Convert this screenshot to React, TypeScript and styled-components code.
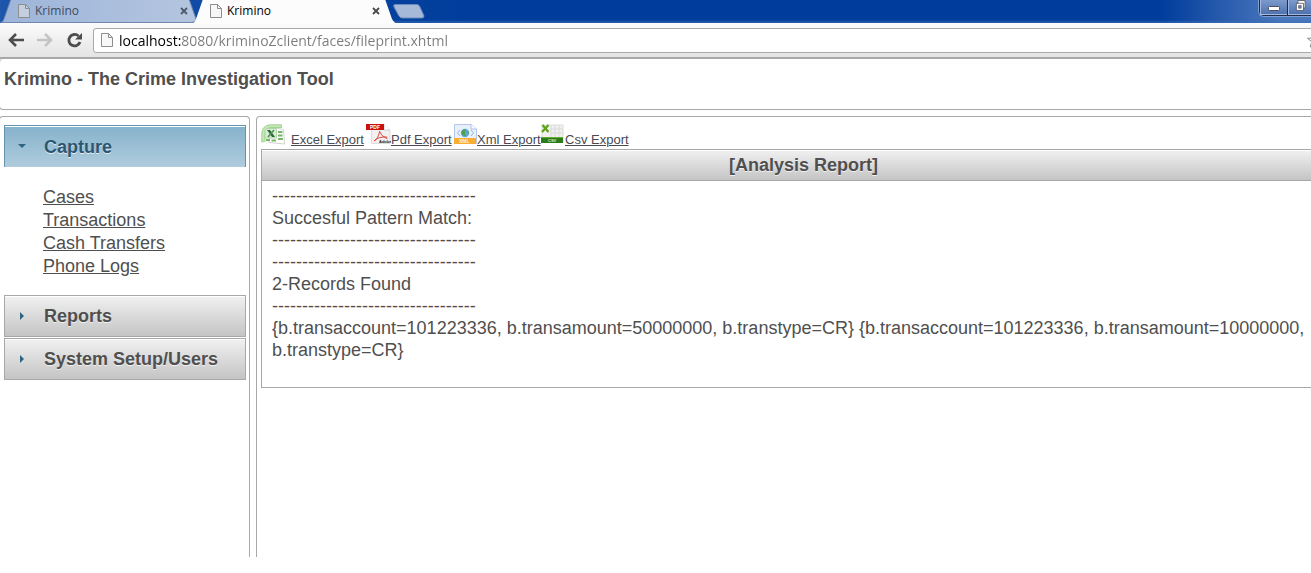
import React from "react";
import styled, { createGlobalStyle } from "styled-components";

const GlobalStyle = createGlobalStyle`
  * { box-sizing: border-box; }
  body {
    margin: 0;
    background: #fff;
    color: #4f4f4f;
    font-family: "Liberation Sans", Arial, sans-serif;
    font-size: 18px;
    line-height: 22px;
    overflow: hidden;
  }
  button { font: inherit; color: inherit; border: 0; padding: 0; background: none; }
`;

const Screen = styled.div`
  overflow: hidden;
`;

const BrowserWindow = styled.div`
  margin-right: -40px;
`;

const TabStrip = styled.header`
  display: flex;
  align-items: flex-start;
  height: 23px;
  background: linear-gradient(90deg, #1c55ab 0, #003c9b 480px, #003c9b 1160px, #4b78bd 1280px);
  box-shadow: inset 0 -2px 2px rgba(60, 110, 180, 0.6);
`;

const TabBox = styled.div`
  position: relative;
  display: flex;
  align-items: center;
  flex: 0 0 192px;
  height: 22px;
  padding: 0 4px 0 18px;
`;

const TabShape = styled.svg`
  position: absolute;
  left: 0;
  top: 0;
  width: 206px;
  height: 24px;
`;

const TabButton = styled.button<{ $active?: boolean }>`
  position: relative;
  display: flex;
  align-items: center;
  flex: 1;
  gap: 5px;
  font-family: "Open Sans", "Noto Sans", sans-serif;
  font-size: 12px;
  line-height: 20px;
  color: ${(p) => (p.$active ? "#000" : "#3f4a5e")};
`;

const CloseButton = styled.button`
  position: relative;
  display: flex;
  width: 8px;
  height: 8px;
`;

const NewTabButton = styled.button`
  display: flex;
  margin: 4px 0 0 8px;
`;

const WindowControls = styled.div`
  display: flex;
  width: 92px;
  height: 16px;
  margin-left: auto;
  border: 1px solid #1c2c4e;
  border-top: 0;
  border-radius: 0 0 5px 5px;
  box-shadow: 0 0 0 1px #7f9fd0;
`;

const WindowButton = styled.button`
  display: flex;
  justify-content: center;
  width: 28px;
  height: 15px;
  background: linear-gradient(#7d9acb, #4b70b0);
  border-right: 1px solid #1c2c4e;
  box-shadow: inset 1px -1px 0 #a4b9dc;

  &:last-child { flex: 1; border-right: 0; }
`;

const Toolbar = styled.nav`
  display: flex;
  align-items: center;
  height: 36px;
  padding: 0 4px 0 8px;
  background: linear-gradient(#fbfbfb, #e4e4e4);
  border-bottom: 2px solid #a8a8a8;
`;

const NavButton = styled.button`
  display: flex;
  flex: 0 0 29px;
`;

const AddressBar = styled.label`
  display: flex;
  align-items: center;
  flex: 1;
  height: 25px;
  margin-left: -2px;
  padding: 0 23px 0 7px;
  gap: 6px;
  background: #fff;
  border: 1px solid #a9a9a9;
  border-radius: 3px;
`;

const AddressInput = styled.input`
  flex: 1;
  height: 22px;
  padding: 0;
  border: 0;
  outline: 0;
  font-family: "Open Sans", "Noto Sans", sans-serif;
  font-size: 14px;
  color: transparent;
  background: linear-gradient(90deg, #000 63px, #7a7a7a 63px);
  background-clip: text;
  -webkit-background-clip: text;
`;

const PageHeader = styled.div`
  height: 51px;
  margin-left: -1px;
  padding: 9px 4px;
  border: 1px solid #a8a8a8;
  border-radius: 4px;
  border-top: 0;
`;

const AppTitle = styled.h1`
  margin: 0;
  font-size: 18px;
  line-height: 22px;
`;

const Columns = styled.div`
  display: flex;
  gap: 6px;
  margin: 6px 0 0 -1px;
  min-height: calc(100vh - 132px);
`;

const pane = `
  border: 1px solid #a8a8a8;
  border-bottom: 0;
  border-radius: 4px 4px 0 0;
`;

const Sidebar = styled.aside`
  ${pane}
  flex: 0 0 251px;
  padding: 8px 3px 0 4px;
`;

const Content = styled.main`
  ${pane}
  flex: 1;
  min-width: 0;
  padding: 6px 4px 0;
`;

const SectionButton = styled.button<{ $open?: boolean }>`
  display: flex;
  align-items: center;
  width: 100%;
  height: 42px;
  margin-bottom: 1px;
  padding: 0 14px;
  gap: 20px;
  font-weight: bold;
  text-align: left;
  color: ${(p) => (p.$open ? "#2b5672" : "#4f4f4f")};
  text-shadow: 0 1px 0 rgba(255, 255, 255, 0.7);
  border: 1px solid ${(p) => (p.$open ? "#6393ad" : "#a8a8a8")};
  border-bottom-width: ${(p) => (p.$open ? 0 : 1)}px;
  background: ${(p) =>
    p.$open ? "linear-gradient(#85b2cb, #b0ccdd)" : "linear-gradient(#f1f1f1, #c4c4c4)"};
  box-shadow: inset 0 1px 0 #fff;
`;

const LinkList = styled.ul`
  list-style: none;
  margin: 0;
  padding: 18px 39px 17px;
  line-height: 23px;
`;

const PlainLink = styled.a`
  color: #4f4f4f;
  text-decoration: underline;
`;

const ExportBar = styled.div`
  display: flex;
  height: 26px;
`;

const ExportLink = styled.a<{ $width: number; $gap?: number }>`
  display: flex;
  flex: 0 0 ${(p) => p.$width}px;
  gap: ${(p) => p.$gap || 0}px;
  font-size: 13px;
  line-height: 18px;
  color: #4a4a52;
  white-space: nowrap;
  text-decoration: none;

  svg { flex: none; margin-top: 1px; }
  span { padding-top: 8px; text-decoration: underline; }
`;

const Report = styled.section`
  border: 1px solid #a8a8a8;
`;

const ReportTitle = styled.h2`
  margin: 0;
  height: 31px;
  font-size: 18px;
  line-height: 30px;
  text-align: center;
  text-shadow: 0 1px 0 rgba(255, 255, 255, 0.7);
  background: linear-gradient(#f1f1f1, #c4c4c4);
  border-bottom: 1px solid #a8a8a8;
  box-shadow: inset 0 1px 0 #fff;
`;

const ReportBody = styled.div`
  padding: 4px 10px 26px;
`;

const ReportLine = styled.p`
  margin: 0;
`;

const PageIcon = ({ faded }: { faded?: boolean }) => (
  <svg width="12" height="14" viewBox="0 0 12 14" fill={faded ? "#c3cede" : "#f7f7f7"} stroke="#8d8d8d">
    <path d="M.5 .5H7.500L11.500 4.500V13.500H.5Z" />
    <path d="M7.500 .5V4.500H11.500" fill="none" />
  </svg>
);

const TabItem = ({ active }: { active?: boolean }) => (
  <TabBox>
    <TabShape viewBox="0 0 206 24">
      <defs>
        <linearGradient id="idle-tab" x1="0" x2="1">
          <stop offset="0" stopColor="#9db5da" />
          <stop offset="1" stopColor="#b4c5df" />
        </linearGradient>
      </defs>
      <path
        d={active ? "M0 24Q3 22 4 19L11 -1H193L200 19Q202 23 206 24Z" : "M1 22.500Q3 22 4 19L11 -1H189L196 19Q196 22 192 22.500Z"}
        fill={active ? "#fcfcfc" : "url(#idle-tab)"}
        stroke={active ? "none" : "#7187ad"}
      />
    </TabShape>
    <TabButton role="tab" aria-selected={!!active} $active={active}>
      <PageIcon faded={!active} />
      Krimino
    </TabButton>
    <CloseButton aria-label="Close tab">
      <svg width="8" height="8" viewBox="0 0 8 8" stroke={active ? "#4a4a4a" : "#4d586b"} strokeWidth="1.800">
        <path d="M1 1L7 7M7 1L1 7" />
      </svg>
    </CloseButton>
  </TabBox>
);

const ExcelIcon = () => (
  <svg width="24" height="22" viewBox="0 0 24 22">
    <path d="M15 4L22.500 5.500L23.500 20L8 18.500V16Z" fill="#fff" stroke="#cfd3cf" />
    <path d="M.8 18V9Q1.500 1.500 9 .8H20.500V3.500H10Q4.500 4 4 9V17.500Z" fill="#c8e7b9" stroke="#8fcb7e" strokeWidth=".8" />
    <path d="M4 6Q5 4.500 7 4.500H15.500V14H4Z" fill="#dcebd8" stroke="#a5cf9b" strokeWidth=".8" />
    <path d="M6 6H9L14 13H11Z" fill="#256b33" />
    <path d="M13 6L7 13" stroke="#4d9350" strokeWidth="1.600" />
    <path d="M17 8H21.500M17 11.500H21.500M17 15H22M5 16H9M10.500 16.500H15" stroke="#77b56b" strokeWidth="2" />
  </svg>
);

const PdfIcon = () => (
  <svg width="25" height="22" viewBox="0 0 25 22">
    <path d="M5.500 .5H18L24 6V19.500H5.500Z" fill="#f1f1f1" stroke="#dcdcdc" />
    <path d="M18 .5V6H24" fill="#fff" stroke="#cfcfcf" />
    <rect width="18" height="6" fill="#c9100f" />
    <text x="4" y="5" fontSize="5" fontWeight="bold" fill="#fff">PDF</text>
    <path d="M8 17Q12 15 13.500 8Q13 6 14.500 9Q16 13 21 14.500Q22 12.500 17 13Q11 13.500 8 17Z" fill="none" stroke="#e2453f" />
    <text x="13" y="19" fontSize="4" fontWeight="bold" fill="#222">Adobe</text>
  </svg>
);

const XmlIcon = () => (
  <svg width="23" height="22" viewBox="0 0 23 22">
    <path d="M.5 .5H17L22.500 5V19.500H.5Z" fill="#e8f0fb" stroke="#b4c8e6" />
    <path d="M17 .5V5H22.500" fill="#fff" stroke="#a9c1e6" />
    <circle cx="11" cy="9" r="4.200" fill="#5fa9dd" />
    <path d="M8 7Q10 4.500 12 6Q10 9 12 12Q8 12 7.500 9ZM13 7L15 8L14 11Z" fill="#4f9f4a" />
    <path d="M6 6L3.500 9L6 12M17 6L19.500 9L17 12" fill="none" stroke="#9db5d6" />
    <rect y="14" width="22" height="6" fill="#f9ad32" />
    <text x="5" y="19" fontSize="5" fontWeight="bold" fill="#fff3d2">XML</text>
  </svg>
);

const CsvIcon = () => (
  <svg width="24" height="20" viewBox="0 0 24 20">
    <rect x="1" y="1" width="21" height="17" fill="#f0f0f0" stroke="#dedede" />
    <path d="M10 1V13M14 1V13M18 1V13M9 5H22M9 9H22" stroke="#dadada" />
    <rect x="0" y="13" width="22" height="6" fill="#2c7c1c" />
    <path d="M0 13.500H22" stroke="#63ad35" />
    <path d="M1.500 1L7.500 8M7.500 1L1 8" stroke="#5fa315" strokeWidth="2.200" />
    <text x="7" y="18" fontSize="4" fontWeight="bold" fill="#dff0d5">CSV</text>
  </svg>
);

const Chevron = ({ open }: { open?: boolean }) => (
  <svg width="5" height="8" viewBox="0 0 5 8" overflow="visible" fill="#2c6481">
    <path d={open ? "M-1 1H7L3 5Z" : "M1 0L5 4L1 8Z"} />
  </svg>
);

const captureLinks = ["Cases", "Transactions", "Cash Transfers", "Phone Logs"];
const rule = "-".repeat(34);
const reportLines = [
  rule,
  "Succesful Pattern Match:",
  rule,
  rule,
  "2-Records Found",
  rule,
  "{b.transaccount=101223336, b.transamount=50000000, b.transtype=CR} {b.transaccount=101223336, b.transamount=10000000, b.transtype=CR}",
];

export default function App() {
  return (
    <Screen>
      <GlobalStyle />
      <BrowserWindow>
        <TabStrip>
          <TabItem />
          <TabItem active />
          <NewTabButton aria-label="New tab">
            <svg width="34" height="15" viewBox="0 0 34 15">
              <path d="M3 .5H25Q27 .5 28 3L32 12Q32 14 30 14H10Q8 14 7 12L2 3Q1 .5 3 .5Z" fill="#a6b9d9" stroke="#6b89bc" />
            </svg>
          </NewTabButton>
          <WindowControls>
            <WindowButton aria-label="Minimize">
              <svg width="14" height="12" viewBox="0 0 14 12">
                <rect x="1.500" y="6.500" width="11" height="4" rx="1" fill="#fff" stroke="#4b4f60" />
              </svg>
            </WindowButton>
            <WindowButton aria-label="Restore">
              <svg width="34" height="13" viewBox="0 0 34 13" fill="#fff" stroke="#4b4f60">
                <path d="M12.500 -1H21.500V8.500H12.500Z" />
                <path d="M10.500 2.500H19.500V11.500H10.500Z" />
                <rect x="13.500" y="5.500" width="3" height="3" fill="#7995c5" />
              </svg>
            </WindowButton>
            <WindowButton aria-label="Close window" />
          </WindowControls>
        </TabStrip>
        <Toolbar>
          <NavButton aria-label="Back">
            <svg width="16" height="14" viewBox="0 0 16 14" fill="none" stroke="#4c4c4c" strokeWidth="2.600">
              <path d="M8 1L2 7L8 13M2 7H16" />
            </svg>
          </NavButton>
          <NavButton aria-label="Forward">
            <svg width="16" height="14" viewBox="0 0 16 14" fill="none" stroke="#c4c4c4" strokeWidth="2.600">
              <path d="M8 1L14 7L8 13M14 7H0" />
            </svg>
          </NavButton>
          <NavButton aria-label="Reload">
            <svg width="17" height="16" viewBox="0 0 17 16">
              <path d="M12.500 4A5.700 5.700 0 1 0 14 10" fill="none" stroke="#4c4c4c" strokeWidth="2.800" />
              <path d="M16 1V7.500H9Z" fill="#4c4c4c" />
            </svg>
          </NavButton>
          <AddressBar>
            <PageIcon />
            <AddressInput aria-label="Address" defaultValue="localhost:8080/kriminoZclient/faces/fileprint.xhtml" />
            <svg width="16" height="16" viewBox="0 0 16 16" fill="#fff" stroke="#858585">
              <path d="M8 1L10 6L15.500 6.300L11.300 9.700L12.700 15L8 12L3.300 15L4.700 9.700L.5 6.300L6 6Z" />
            </svg>
          </AddressBar>
        </Toolbar>
        <PageHeader>
          <AppTitle>Krimino - The Crime Investigation Tool</AppTitle>
        </PageHeader>
        <Columns>
          <Sidebar>
            <SectionButton $open aria-expanded>
              <Chevron open />
              Capture
            </SectionButton>
            <LinkList>
              {captureLinks.map((label) => (
                <li key={label}>
                  <PlainLink href="#">{label}</PlainLink>
                </li>
              ))}
            </LinkList>
            <SectionButton aria-expanded={false}>
              <Chevron />
              Reports
            </SectionButton>
            <SectionButton aria-expanded={false}>
              <Chevron />
              System Setup/Users
            </SectionButton>
          </Sidebar>
          <Content>
            <ExportBar>
              <ExportLink href="#" $width={105} $gap={6}>
                <ExcelIcon />
                <span>Excel Export</span>
              </ExportLink>
              <ExportLink href="#" $width={88}>
                <PdfIcon />
                <span>Pdf Export</span>
              </ExportLink>
              <ExportLink href="#" $width={87}>
                <XmlIcon />
                <span>Xml Export</span>
              </ExportLink>
              <ExportLink href="#" $width={88}>
                <CsvIcon />
                <span>Csv Export</span>
              </ExportLink>
            </ExportBar>
            <Report>
              <ReportTitle>[Analysis Report]</ReportTitle>
              <ReportBody>
                {reportLines.map((line, i) => (
                  <ReportLine key={i}>{line}</ReportLine>
                ))}
              </ReportBody>
            </Report>
          </Content>
        </Columns>
      </BrowserWindow>
    </Screen>
  );
}
